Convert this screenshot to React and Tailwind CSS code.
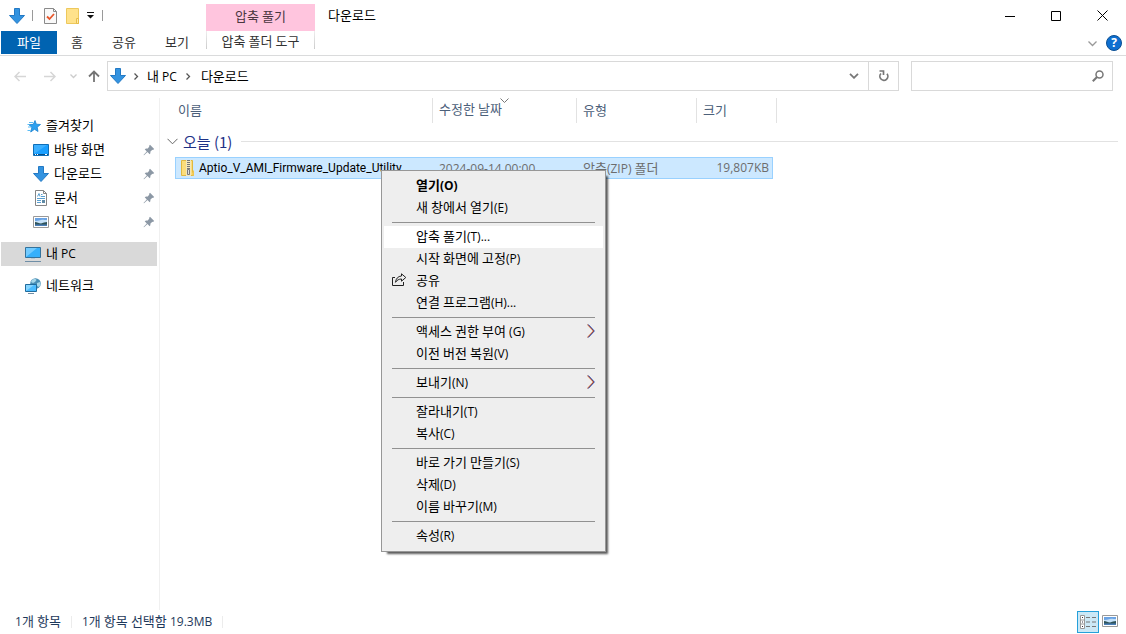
import React from "react";

/* Hangul is set one size above the Latin glyphs so both look equally large. */
function T({ children }) {
  return children.split(/([\x20-\x7e]+)/).map((part, i) =>
    i % 2 ? (
      <span key={i} className="whitespace-pre text-[12px] font-['Open_Sans','Noto_Sans_CJK_KR',sans-serif]">
        {part}
      </span>
    ) : (
      part
    )
  );
}

function DownArrow() {
  return (
    <svg width="16" height="16" viewBox="0 0 16 16" className="shrink-0">
      <path d="M5.500.5h5v7h5L8 15.500.5 7.500h5z" fill="#3393e0" stroke="#2379c4" strokeWidth="1" />
    </svg>
  );
}

function Chevron({ d = "right", className = "" }) {
  const paths = { right: "M2.500 1.500 5.500 4.500 2.500 7.500", down: "M.5 2.500 4.500 6.500 8.500 2.500" };
  return (
    <svg width="9" height="9" viewBox="0 0 9 9" fill="none" stroke="currentColor" strokeWidth="1.300" className={`shrink-0 ${className}`}>
      <path d={paths[d]} />
    </svg>
  );
}

function StarIcon() {
  return (
    <svg width="16" height="16" viewBox="0 0 16 16" className="shrink-0">
      <path d="M10 2.500 11.300 6.200l4.200.3-3.300 2.700.8 4.300-3.500-2.200L5.700 14l1.200-4.500L4 6.700l4.300-.4z" fill="#2ba0f0" stroke="#1680cf" strokeWidth=".8" />
      <path d="M4 4.500h4M2.500 6.500h2M3 9h3M2.500 12.500h3" stroke="#5bbcf5" />
    </svg>
  );
}

function DesktopIcon() {
  return (
    <svg width="16" height="16" viewBox="0 0 16 16" className="shrink-0">
      <path d="M.5 2.500h15v11H.5z" fill="#1a9fff" stroke="#0f6fb8" />
      <path d="M1 12V3h13z" fill="#3db0ff" />
      <path d="M1 12.500h14" stroke="#08508a" />
      <path d="M2 12.500h1M4 12.500h1M12 12.500h2" stroke="#fff" />
    </svg>
  );
}

function DocumentIcon() {
  return (
    <svg width="16" height="16" viewBox="0 0 16 16" className="shrink-0">
      <path d="M2.500.5h8l3 3v12h-11z" fill="#fff" stroke="#858585" />
      <path d="M10.500.5v3h3" fill="none" stroke="#858585" />
      <path d="M4.500 6.500 6 3.500l1 3M8 4.500h1.500M8 6.500h4M4 8.500h8M4 10.500h4M4 12.500h4" fill="none" stroke="#5a9fd0" />
      <path d="M9 10h3v3H9z" fill="#5f8aa5" />
    </svg>
  );
}

function PictureIcon() {
  return (
    <svg width="16" height="16" viewBox="0 0 16 16" className="shrink-0">
      <path d="M.5 2.500h15v11H.5z" fill="#fff" stroke="#999" />
      <path d="M2 4h12v8H2z" fill="#c4e0f8" />
      <path d="M2 4h12v2c-3 0-4-.6-6 0-2 .5-4 1-6 1z" fill="#6aa3e4" />
      <path d="M2 8c2 0 4 1.500 6 1.500 2-.5 4-1.500 6-1.500v3H2z" fill="#2f5358" />
      <path d="M2 10.500h12V12H2z" fill="#4a7fb8" />
    </svg>
  );
}

function PcIcon() {
  return (
    <svg width="16" height="16" viewBox="0 0 16 16" className="shrink-0">
      <path d="M.5 1.500h15v10H.5z" fill="#36b0fb" stroke="#33729c" />
      <path d="M1 11 12 2H1z" fill="#72cbff" />
      <path d="M6 12h4v1H6z" fill="#b5c9d6" />
      <path d="M0 15.500h16" stroke="#6f8ea6" />
    </svg>
  );
}

function NetworkIcon() {
  return (
    <svg width="16" height="16" viewBox="0 0 16 16" className="shrink-0">
      <circle cx="10.500" cy="5.500" r="5.300" fill="#4a8fb5" />
      <path d="M7 2c2-1.500 4-1 4.500 0L10 4 8 5 6 4zM12 5l3-1c1 2 0 4-1 5l-2-1z" fill="#a8d8ea" />
      <path d="M.5 6.500h11v7H.5z" fill="#4cbcff" stroke="#216b9c" />
      <path d="M1 13 9 7H1z" fill="#86d5ff" />
      <path d="M3 15.500h6" stroke="#6f8ea6" />
    </svg>
  );
}

function Pin() {
  return (
    <svg width="12" height="12" viewBox="0 0 12 12" className="shrink-0">
      <path d="M7 .8 11.200 5 10 6 9.300 5.700 7.300 7.700c.3 1.100 0 2-.6 2.600L4.500 8.100 1 11.200.5 11 3.800 7.400 1.700 5.300c.7-.6 1.600-.9 2.600-.6l2-2L6 2z" fill="#8c98a5" />
    </svg>
  );
}

function ZipIcon() {
  return (
    <svg width="14" height="16" viewBox="0 0 14 16" className="shrink-0">
      <path d="M.5.5h11v12h1v3H.5z" fill="#fbdd7c" stroke="#e0b840" />
      <path d="M12 10.500h1v5h-2z" fill="#f0c64e" />
      <path d="M5 0h5v16H5z" fill="#f3e6b8" />
      <path d="M7.500 0v9" stroke="#777" strokeWidth="3" strokeDasharray="1 1" />
      <path d="M6.500 9.500h2v5h-2z" fill="#ddd" stroke="#777" />
    </svg>
  );
}

function NavItem({ icon, label, sub, pinned, active }) {
  return (
    <li>
      <a
        href="#"
        aria-current={active ? "page" : undefined}
        className={`flex h-6 items-center gap-[5px] pr-[2px] ${sub ? "pl-8" : "pl-6"} ${active ? "bg-[#d9d9d9]" : ""}`}
      >
        {icon}
        <span className="grow pb-[2px]">
          <T>{label}</T>
        </span>
        {pinned && <Pin />}
      </a>
    </li>
  );
}

const menu = [
  [{ label: "열기(O)", bold: true }, { label: "새 창에서 열기(E)" }],
  [
    { label: "압축 풀기(T)...", active: true },
    { label: "시작 화면에 고정(P)" },
    { label: "공유", share: true },
    { label: "연결 프로그램(H)..." },
  ],
  [{ label: "액세스 권한 부여 (G)", arrow: true }, { label: "이전 버전 복원(V)" }],
  [{ label: "보내기(N)", arrow: true }],
  [{ label: "잘라내기(T)" }, { label: "복사(C)" }],
  [{ label: "바로 가기 만들기(S)" }, { label: "삭제(D)" }, { label: "이름 바꾸기(M)" }],
  [{ label: "속성(R)" }],
];

function ContextMenu() {
  return (
    <div
      role="menu"
      className="absolute left-[381px] top-[170px] w-[225px] border border-[#979797] bg-[#eee] px-[2px] py-1 text-black shadow-[4px_4px_2px_-2px_rgba(0,0,0,0.65)]"
    >
      {menu.map((group, g) => (
        <div key={g} role="group">
          {g > 0 && <hr className="mx-2 my-[3px] border-t border-[#919191]" />}
          {group.map((item) => (
            <button
              key={item.label}
              type="button"
              role="menuitem"
              className={`flex h-[22px] w-full items-center px-2 pb-[2px] text-left ${item.active ? "bg-white" : ""} ${item.bold ? "font-bold" : ""}`}
            >
              <span className="w-6 shrink-0">
                {item.share && (
                  <svg width="15" height="14" viewBox="0 0 15 14" fill="none" stroke="#222">
                    <path d="M3 4.500H.5v8h11V9M9.500.8l4.300 3.700-4.300 3.700V6C7 6 5 7 3.500 9.300 4 5.500 6 3.200 9.500 3z" />
                  </svg>
                )}
              </span>
              <span className="grow">
                <T>{item.label}</T>
              </span>
              {item.arrow && (
                <svg width="8" height="14" viewBox="0 0 8 14" fill="none">
                  <path d="M.2.5 6.200 7 .2 13.500" stroke="#e08a50" />
                  <path d="M1.500.5 7.500 7 1.500 13.500" stroke="#3f7fe0" />
                  <path d="M.9.5 6.900 7 .9 13.500" stroke="#7a2438" strokeWidth=".8" />
                </svg>
              )}
            </button>
          ))}
        </div>
      ))}
    </div>
  );
}

function TitleBar() {
  return (
    <div className="flex h-[31px]">
      <div className="flex w-[206px] shrink-0 items-center pl-[9px]">
        <DownArrow />
        <span className="mx-[7px] h-[11px] w-px bg-[#9a9a9a]" />
        <button type="button" aria-label="속성" className="ml-1">
          <svg width="13" height="16" viewBox="0 0 13 16" className="block">
            <path d="M.5.5h9l3 3v12H.5z" fill="#f9f9f9" stroke="#8a8a8a" />
            <path d="M9.500.5v3h3" fill="none" stroke="#8a8a8a" />
            <path d="M3 8.500 5.500 11 10 6" fill="none" stroke="#e8562a" strokeWidth="1.800" />
          </svg>
        </button>
        <button type="button" aria-label="새 폴더" className="ml-[9px]">
          <svg width="13" height="16" viewBox="0 0 13 16" className="block">
            <path d="M.5.5h12v15H.5z" fill="#ffe28b" stroke="#edc85c" />
            <path d="M10.500 15.500v-5h2v5z" fill="#ffeaa8" stroke="#e6bd48" />
          </svg>
        </button>
        <button type="button" aria-label="빠른 실행 도구 모음 사용자 지정" className="ml-2">
          <svg width="7" height="7" viewBox="0 0 7 7" className="block">
            <path d="M0 0h7v1H0zM0 3h7L3.500 6.500z" fill="#111" />
          </svg>
        </button>
        <span className="ml-2 h-[11px] w-px bg-[#9a9a9a]" />
      </div>
      <div className="mt-1 flex w-[109px] shrink-0 items-center justify-center bg-[#ffc5de] pb-[2px] text-[#4a3640]"><span><T>압축 풀기</T></span></div>
      <h1 className="grow pl-[13px] leading-[29px] text-black">다운로드</h1>
      <div className="flex pr-px">
        <button type="button" aria-label="최소화" className="flex w-[46px] items-center justify-center">
          <svg width="10" height="10" viewBox="0 0 10 10"><path d="M0 5.500h10" stroke="#000" /></svg>
        </button>
        <button type="button" aria-label="최대화" className="flex w-[46px] items-center justify-center">
          <svg width="10" height="10" viewBox="0 0 10 10"><path d="M.5.5h9v9h-9z" fill="none" stroke="#000" /></svg>
        </button>
        <button type="button" aria-label="닫기" className="flex w-[46px] items-center justify-center">
          <svg width="11" height="11" viewBox="0 0 11 11"><path d="M.5.5l10 10M10.500.5l-10 10" stroke="#000" /></svg>
        </button>
      </div>
    </div>
  );
}

function RibbonTabs() {
  const tab = "h-[23px] pb-[2px]";
  return (
    <div className="flex h-[25px] items-start border-b border-[#dadbdc] pl-px text-[#333]">
      <div className="flex w-[205px] shrink-0">
        <button type="button" className={`${tab} w-14 bg-[#0063b1] text-white`}>파일</button>
        <button type="button" className={`${tab} w-10`}>홈</button>
        <button type="button" className={`${tab} w-[54px]`}>공유</button>
        <button type="button" className={`${tab} w-[52px]`}>보기</button>
      </div>
      <button type="button" className={`${tab} flex w-[109px] shrink-0 items-center justify-between`}>
        <span className="h-[18px] w-px self-start bg-linear-to-b from-[#eee] to-[#ccc]" />
        <span><T>압축 폴더 도구</T></span>
        <span className="h-[18px] w-px self-start bg-linear-to-b from-[#eee] to-[#ccc]" />
      </button>
      <div className="flex grow items-center justify-end gap-[9px] self-stretch pr-1 text-[#999]">
        <button type="button" aria-label="리본 확장"><Chevron d="down" className="block" /></button>
        <button type="button" aria-label="도움말" className="h-4 w-4 rounded-full border border-[#0b4f93] bg-[#0e6fd0] text-center text-[12px] font-bold leading-[14px] text-white font-['Open_Sans',sans-serif]">
          ?
        </button>
      </div>
    </div>
  );
}

function AddressBar() {
  return (
    <div className="flex items-center pb-[7px] pr-[13px] pt-[5px]">
      <div className="flex w-[107px] shrink-0 items-center pl-[14px]">
        <button type="button" aria-label="뒤로">
          <svg width="12" height="11" viewBox="0 0 12 11" fill="none" stroke="#d6d6d6" strokeWidth="1.500" className="block"><path d="M12 5.500H1M5.500 1 1 5.500 5.500 10" /></svg>
        </button>
        <button type="button" aria-label="앞으로" className="ml-[18px]">
          <svg width="12" height="11" viewBox="0 0 12 11" fill="none" stroke="#d6d6d6" strokeWidth="1.500" className="block"><path d="M0 5.500h11M6.500 1 11 5.500 6.500 10" /></svg>
        </button>
        <button type="button" aria-label="최근 위치" className="ml-[14px] text-[#ccc]">
          <svg width="7" height="5" viewBox="0 0 7 5" fill="none" stroke="currentColor" strokeWidth="1.300" className="block"><path d="M.5.5l3 3 3-3" /></svg>
        </button>
        <button type="button" aria-label="위로" className="ml-[11px]">
          <svg width="12" height="12" viewBox="0 0 12 12" fill="none" stroke="#757575" strokeWidth="1.800" className="block"><path d="M6 12V1.500M1 6.500l5-5 5 5" /></svg>
        </button>
      </div>
      <div className="flex h-[30px] grow border border-[#d9d9d9] text-black">
        <div className="flex grow items-center pl-[2px]">
          <DownArrow />
          <Chevron className="ml-[6px] text-[#555]" />
          <a href="#" className="ml-[6px]"><T>내 PC</T></a>
          <Chevron className="ml-[7px] text-[#555]" />
          <a href="#" className="ml-2">다운로드</a>
        </div>
        <button type="button" aria-label="이전 위치" className="flex w-7 items-center justify-center text-[#777]">
          <svg width="10" height="6" viewBox="0 0 10 6" fill="none" stroke="currentColor" strokeWidth="1.800"><path d="M1 .8l4 4 4-4" /></svg>
        </button>
        <button type="button" aria-label="새로 고침" className="flex w-[30px] items-center justify-center border-l border-[#d9d9d9]">
          <svg width="10" height="12" viewBox="0 0 10 12" fill="none" stroke="#777" strokeWidth="1.700"><path d="M2 3.500a4 4 0 1 0 6 .3M.5 1h4v4" /></svg>
        </button>
      </div>
      <label className="ml-3 flex h-[30px] w-[202px] items-center border border-[#d9d9d9] pr-2">
        <input type="text" aria-label="다운로드 검색" className="min-w-0 grow px-2 outline-none" />
        <svg width="12" height="12" viewBox="0 0 12 12" fill="none" stroke="#777"><circle cx="7.500" cy="4.500" r="3.500" strokeWidth="1.500" /><path d="M5 7 .8 11.200" strokeWidth="2" /></svg>
      </label>
    </div>
  );
}

function FileTable() {
  const head = "relative h-[25px] border-r border-[#e2e2e2] pb-[2px] text-left font-normal";
  const cell = "flex h-[22px] items-center border-y border-[#99d1ff] bg-[#cce8ff]";
  return (
    <table className="w-full table-fixed border-separate border-spacing-0">
      <colgroup>
        <col className="w-[273px]" />
        <col className="w-[144px]" />
        <col className="w-[120px]" />
        <col className="w-[80px]" />
        <col />
      </colgroup>
      <thead className="text-[#4c607a]">
        <tr>
          <th className={`${head} pl-[18px]`}>이름</th>
          <th className={`${head} pl-[6px]`}>
            <T>수정한 날짜</T>
            <svg width="9" height="5" viewBox="0 0 9 5" fill="none" stroke="#777" className="absolute left-[67px] top-0"><path d="M.5.5l4 4 4-4" /></svg>
          </th>
          <th className={`${head} pl-[6px]`}>유형</th>
          <th className={`${head} pl-[6px]`}>크기</th>
          <td />
        </tr>
      </thead>
      <tbody>
        <tr>
          <th colSpan={5} className="h-[34px] p-0 pt-[3px] font-normal">
            <div className="flex items-center pl-[7px]">
              <svg width="11" height="7" viewBox="0 0 11 7" fill="none" stroke="#666"><path d="M.5.8l5 5 5-5" /></svg>
              <span className="ml-[5px] text-[15px] leading-5 text-[#1e3287]">오늘 (1)</span>
              <span className="ml-[9px] h-px grow bg-[#e2e2e2]" />
            </div>
          </th>
        </tr>
        <tr className="text-[#6d6d6d]">
          <td className="p-0 pl-[15px]">
            <div className={`${cell} gap-1 border-l pl-[5px] text-black`}>
              <ZipIcon />
              <span className="text-[12px] font-['Roboto','Noto_Sans_CJK_KR',sans-serif]">Aptio_V_AMI_Firmware_Update_Utility</span>
            </div>
          </td>
          <td className="p-0"><div className={`${cell} pl-[6px]`}><span><T>2024-09-14 00:00</T></span></div></td>
          <td className="p-0"><div className={`${cell} pl-[6px]`}><span><T>압축(ZIP) 폴더</T></span></div></td>
          <td className="p-0 pr-1"><div className={`${cell} justify-end border-r pr-[3px]`}><T>19,807KB</T></div></td>
          <td />
        </tr>
      </tbody>
    </table>
  );
}

function StatusBar() {
  return (
    <footer className="flex h-6 items-center pl-[15px] pr-2 text-[#1e395b]">
      <span className="pb-[2px]"><T>1개 항목</T></span>
      <span className="mx-[10px] h-3 w-px bg-[#ececec]" />
      <span className="pb-[2px]"><T>1개 항목 선택함 19.3MB</T></span>
      <span className="ml-[10px] h-3 w-px bg-[#ececec]" />
      <span className="grow" />
      <button type="button" aria-label="자세히 보기" className="flex h-[22px] w-[22px] items-center justify-center border border-[#26a0da] bg-[#cbe8f6]">
        <svg width="16" height="14" viewBox="0 0 16 14">
          <path d="M.5.5h4v13h-4zM.5 5h4M.5 9h4" fill="#fff" stroke="#999" />
          <path d="M2 2.500h1M2 7h1M2 11.500h1" stroke="#334" />
          <path d="M6 2.500h4M12 2.500h4M6 7h4M12 7h4M6 11.500h4M12 11.500h4" stroke="#777" />
        </svg>
      </button>
      <button type="button" aria-label="큰 아이콘 보기" className="ml-[3px] pb-[2px]"><PictureIcon /></button>
    </footer>
  );
}

export default function App() {
  return (
    <div className="relative flex min-h-screen flex-col bg-white text-[13px] leading-4 text-black font-['Noto_Sans_CJK_KR',sans-serif]">
      <header>
        <TitleBar />
        <RibbonTabs />
        <AddressBar />
      </header>
      <div className="flex grow">
        <nav className="w-40 shrink-0 border-r border-[#f0f0f0] pl-px pr-[2px] pt-4">
          <ul>
            <NavItem icon={<StarIcon />} label="즐겨찾기" />
            <NavItem icon={<DesktopIcon />} label="바탕 화면" sub pinned />
            <NavItem icon={<DownArrow />} label="다운로드" sub pinned />
            <NavItem icon={<DocumentIcon />} label="문서" sub pinned />
            <NavItem icon={<PictureIcon />} label="사진" sub pinned />
          </ul>
          <ul className="mt-2 flex flex-col gap-2">
            <NavItem icon={<PcIcon />} label="내 PC" active />
            <NavItem icon={<NetworkIcon />} label="네트워크" />
          </ul>
        </nav>
        <main className="min-w-0 grow pr-2">
          <FileTable />
        </main>
      </div>
      <StatusBar />
      <ContextMenu />
    </div>
  );
}
